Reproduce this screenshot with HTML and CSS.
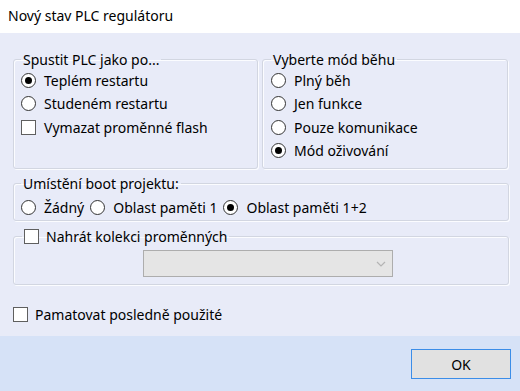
FILE: index.html
```html
<!DOCTYPE html>
<html lang="cs">
  <head>
    <meta charset="UTF-8" />
    <title>Nový stav PLC regulátoru</title>
    <link rel="stylesheet" href="styles.css">
  </head>
  <body>
    <div class="dialog">
      <div class="titlebar">Nový stav PLC regulátoru</div>

      <div class="content">
        <div class="top-row">
          <fieldset class="group group-start">
            <legend>Spustit PLC jako po...</legend>
            <div class="opt"><span class="radio on"></span>Teplém restartu</div>
            <div class="opt"><span class="radio"></span>Studeném restartu</div>
            <div class="opt"><span class="check"></span>Vymazat proměnné flash</div>
          </fieldset>

          <fieldset class="group group-mode">
            <legend>Vyberte mód běhu</legend>
            <div class="opt"><span class="radio"></span>Plný běh</div>
            <div class="opt"><span class="radio"></span>Jen funkce</div>
            <div class="opt"><span class="radio"></span>Pouze komunikace</div>
            <div class="opt"><span class="radio on"></span>Mód oživování</div>
          </fieldset>
        </div>

        <fieldset class="group group-boot">
          <legend>Umístění boot projektu:</legend>
          <div class="inline-opts">
            <div class="opt"><span class="radio"></span>Žádný</div>
            <div class="opt"><span class="radio"></span>Oblast paměti 1</div>
            <div class="opt"><span class="radio on"></span>Oblast paměti 1+2</div>
          </div>
        </fieldset>

        <fieldset class="group group-vars">
          <legend><span class="check"></span>Nahrát kolekci proměnných</legend>
          <div class="combo">
            <svg class="chevron" width="10" height="6" viewBox="0 0 10 6">
              <path d="M1 1 L5 5 L9 1" fill="none" stroke="#b4b4b4" stroke-width="1.2" />
            </svg>
          </div>
        </fieldset>

        <div class="opt remember"><span class="check"></span>Pamatovat posledně použité</div>
      </div>

      <div class="footer">
        <button class="ok">OK</button>
      </div>
    </div>
  </body>
</html>
```

FILE: styles.css
```css
html {
  box-sizing: border-box;
}

*,
*::before,
*::after {
  margin: 0;
  padding: 0;
  box-sizing: inherit;
}

body {
  margin: 0;
  font-family: "Noto Sans", "Segoe UI", sans-serif;
  font-size: 14px;
  color: #000;
  background: #e8ebf8;
}

.dialog {
  width: 520px;
  height: 391px;
  display: flex;
  flex-direction: column;
}

.titlebar {
  height: 33px;
  background: #fff;
  padding-left: 8px;
  line-height: 31px;
  font-size: 14px;
}

.content {
  flex: 1;
  background: #e8ebf8;
  padding: 17px 11px 0 13px;
  display: flex;
  flex-direction: column;
}

.group {
  border: 1px solid #d2d6e1;
  border-radius: 3px;
  box-shadow: inset 1px 1px 0 #fbfcff, 1px 1px 0 #fbfcff;
  padding: 0 7px 6px;
}

.group legend {
  padding: 0 2px;
  line-height: 19px;
}

.top-row {
  display: grid;
  grid-template-columns: 245px 246px;
  gap: 4px;
}

.group-mode {
  padding-left: 8px;
}

.opt {
  display: flex;
  align-items: center;
  height: 23.3px;
  white-space: nowrap;
}

.radio,
.check {
  flex: none;
  display: inline-block;
  width: 15px;
  height: 15px;
  margin-right: 8px;
  background: #fff;
  border: 1px solid #333;
}

.radio {
  border-radius: 50%;
  position: relative;
}

.radio.on::after {
  content: "";
  position: absolute;
  left: 3px;
  top: 3px;
  width: 7px;
  height: 7px;
  border-radius: 50%;
  background: #000;
}

.check {
  border-color: #5f5f5f;
}

.group-boot {
  margin-top: 5px;
  padding-top: 2px;
  padding-bottom: 1px;
}

.inline-opts {
  display: flex;
  gap: 6px;
}

.inline-opts .opt {
  height: 24px;
}

.group-vars {
  margin-top: 6px;
  padding-left: 8px;
  padding-bottom: 7px;
}

.group-vars legend {
  display: flex;
  align-items: center;
}

.group-vars legend .check {
  margin-right: 7px;
}

.combo {
  margin: 4px 0 0 121px;
  width: 250px;
  height: 27px;
  background: #e5e5e5;
  border: 1px solid #adadad;
  display: flex;
  align-items: center;
  justify-content: flex-end;
  padding-right: 6px;
}

.remember {
  margin-top: 18px;
}

.remember .check {
  margin-right: 7px;
}

.footer {
  height: 55px;
  background: #d6e2f7;
  display: flex;
  justify-content: flex-end;
  padding: 13px 9px 0 0;
}

.ok {
  width: 100px;
  height: 30px;
  background: #e1e1e1;
  border: 1px solid #3b8de8;
  font-family: inherit;
  font-size: 14px;
  color: #000;
}
```
